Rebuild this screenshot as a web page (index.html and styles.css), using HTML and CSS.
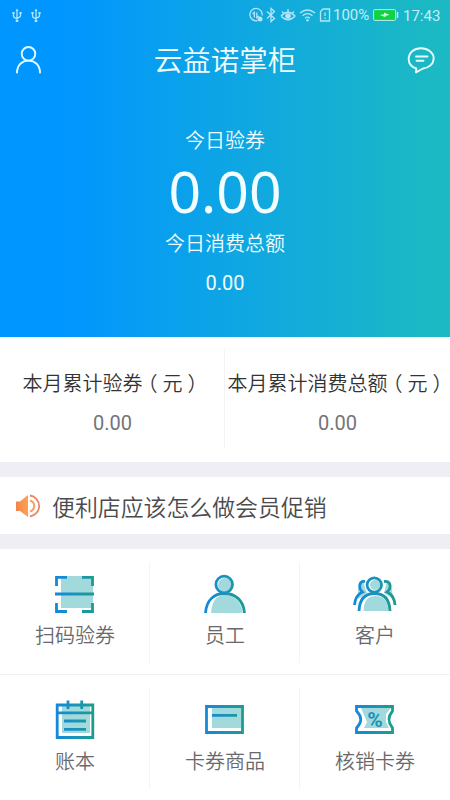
FILE: index.html
```html
<!DOCTYPE html>
<html lang="zh-CN">
<head>
<meta charset="utf-8">
<title>云益诺掌柜</title>
<link rel="stylesheet" href="styles.css">
</head>
<body>
<svg class="defs" width="0" height="0" aria-hidden="true">
  <defs>
    <linearGradient id="brand" gradientUnits="userSpaceOnUse" x1="2" y1="0" x2="42" y2="0">
      <stop offset="0" stop-color="#1389dc"/><stop offset=".5" stop-color="#1a93ba"/><stop offset="1" stop-color="#1d9c8c"/>
    </linearGradient>
    <linearGradient id="horn" gradientUnits="userSpaceOnUse" x1="0" y1="0" x2="24" y2="0">
      <stop offset="0" stop-color="#f2854a"/><stop offset=".45" stop-color="#fba052"/><stop offset="1" stop-color="#e88560"/>
    </linearGradient>
    <symbol id="usb" viewBox="0 0 10 15">
      <path d="M5 2v11M1.500 5v3q0 2 3.500 2.500M8.500 5v2.500q0 2-3.500 2.500"/>
      <path class="solid" d="M3.500 3 5 .5 6.500 3zM.4 4h2.200v2H.4zM7.400 4h2.200v2H7.400zM3.700 12h2.600v2H3.700z"/>
    </symbol>
  </defs>
</svg>
<main class="app">
  <header class="hero">
    <div class="status">
      <div class="status-left">
        <svg class="line" width="10" height="15"><use href="#usb"/></svg>
        <svg class="line" width="10" height="15"><use href="#usb"/></svg>
      </div>
      <div class="status-right">
        <svg class="line" width="16" height="16" viewBox="0 0 16 16"><path d="M9.500 13.600A6.200 6.200 0 1 1 14.200 8.500M6.300 10.500v-5L4.500 7M8.800 5.500v5L10.600 9"/><circle class="solid" cx="12" cy="12" r="2.500"/></svg>
        <svg class="line" width="10" height="16" viewBox="0 0 10 16"><path d="M1 4.500 8.500 11.500 5 14.500v-13L8.500 4.500 1 11.500"/></svg>
        <svg class="line eye" width="16" height="16" viewBox="0 0 16 16"><path d="M1 9q7-7.500 14 0-7 7.500-14 0M2 4.500l1.500 1.500M8 2v2.500M14 4.500 12.500 6"/><circle class="solid" cx="8" cy="9" r="2.800"/></svg>
        <svg class="line wifi" width="17" height="16" viewBox="0 0 17 16"><path d="M1 6q7.500-6 15 0M3.500 8.700q5-4 10 0M6 11.200q2.500-2 5 0"/><circle class="solid" cx="8.500" cy="13.200" r="1.200"/></svg>
        <svg class="line sim" width="12" height="16" viewBox="0 0 12 16"><path d="M4 2h6.500v12h-9V4.500zM6 5.500V9M6 10.500V12"/></svg>
        <span class="percent">100%</span>
        <svg class="battery" width="26" height="12" viewBox="0 0 26 12"><rect x=".6" y=".6" width="22" height="10.800" rx="1" fill="#0fd342" stroke="#b9edf6"/><path d="M24.500 3v6" stroke="#b9edf6" stroke-width="1.500"/><path d="M7 6l4-.8V3.500L16.500 6l-4 .7v1.600z" fill="#d7ffe0"/></svg>
        <span class="time">17:43</span>
      </div>
    </div>
    <nav class="bar">
      <svg class="nav-icon" width="28" height="28" viewBox="0 0 28 28"><circle cx="13.500" cy="7.800" r="6.800"/><path d="M2 26.500C2.200 19 7 14.600 13.500 14.600S24.800 19 25 26.500"/></svg>
      <h1>云益诺掌柜</h1>
      <svg class="nav-icon" width="28" height="28" viewBox="0 0 28 28"><path d="M9.300 22.500C4.500 21 1.700 17.300 1.700 13 1.700 6.700 7 2.200 14 2.200S26.700 6.700 26.700 12.200C26.700 18 21.500 22 16 22.500L9 26.300z"/><path d="M9 10.500h11.500M9.500 14.800h7"/></svg>
    </nav>
    <section class="today">
      <p class="label">今日验券</p>
      <p class="big">0.00</p>
      <p class="label">今日消费总额</p>
      <p class="amount">0.00</p>
    </section>
  </header>
  <section class="month">
    <div class="stat"><p class="stat-name">本月累计验券<span class="paren">（</span>元<span class="paren">）</span></p><p class="stat-value">0.00</p></div>
    <div class="stat"><p class="stat-name">本月累计消费总额<span class="paren">（</span>元<span class="paren">）</span></p><p class="stat-value">0.00</p></div>
  </section>
  <section class="notice">
    <svg width="26" height="26" viewBox="0 0 26 26"><path d="M0 8.500h4L12 2v22L4 18H0z" fill="url(#horn)"/><path d="M14 2.500a10.600 10.600 0 0 1 0 21" fill="none" stroke="#e88a68" stroke-width="1.800"/><path d="M14 7.500a5.700 5.700 0 0 1 0 11" fill="none" stroke="#f6a06b" stroke-width="2"/></svg>
    <span>便利店应该怎么做会员促销</span>
  </section>
  <section class="menu">
    <a class="item"><svg class="icon" viewBox="0 0 44 44"><path class="tint" d="M8 4h32v32H8z"/><path d="M3.500 14V5.400H14M29 5.400h10.500V14M39.500 31v8.500H29M14 39.500H3.500V31M2 22h39"/></svg><span>扫码验券</span></a>
    <a class="item"><svg class="icon" viewBox="0 0 44 44"><path class="tint" d="M8 41C9 28 14 23 22 23s17 6 17.500 18z"/><circle class="tint" cx="22" cy="13" r="7"/><circle cx="21.200" cy="12.500" r="8.300"/><path d="M2.500 41C3.500 28 11 21.500 21.500 21.500S40.500 28 41.500 41"/></svg><span>员工</span></a>
    <a class="item"><svg class="icon" viewBox="0 0 44 44"><path class="tint" d="M10.500 39C11 28 15 24 22.500 24S35 28 35.500 39zM5 17l5-8 4 12-9 6zM39 17l-5-8-3 12 9 6z"/><circle class="back" cx="21.300" cy="13" r="7.200"/><circle class="tint" cx="22" cy="13" r="5"/><circle cx="21.300" cy="13" r="7.200"/><path d="M6 39C6.500 27 12 21.500 21.500 21.500S36.500 27 37 39M12 9.500C6 8.500 5 16 9.500 20 5 22 2 27 1.500 33M31 9.500C38 8.500 39 16 34 20c5 2 7.500 7 8 13"/></svg><span>客户</span></a>
    <a class="item"><svg class="icon" viewBox="0 0 44 44"><path class="tint" d="M9 7h28v28H9z"/><path d="M4.200 7h35.600v32.500H4.200zM4.200 14.800h35.600M15 2.500V11M28.700 2.500V11M11 23h22M11 31.300h22"/></svg><span>账本</span></a>
    <a class="item"><svg class="icon" viewBox="0 0 44 44"><path class="tint" d="M9 10h29v20H9z"/><path d="M3.500 8.500h36v26h-36zM9 17.300h25"/></svg><span>卡券商品</span></a>
    <a class="item"><svg class="icon" viewBox="0 0 44 44"><path class="tint" d="M8 10h30l-5 6v8l3 6H11l3-6z"/><path d="M3.500 8.500h36V13q-7 8.500 0 17v4.500h-36V30q8.500-8.500 0-17z"/><text class="pct" x="22" y="29" text-anchor="middle">%</text></svg><span>核销卡券</span></a>
  </section>
</main>
</body>
</html>
```

FILE: styles.css
```css
* { box-sizing: border-box; }
body { margin: 0; font-family: Roboto, "Noto Sans CJK SC DemiLight", "Noto Sans CJK SC Light", "Noto Sans CJK SC", sans-serif; background: #efeef4; }
p, h1 { margin: 0; font-weight: 400; }
.defs { position: absolute; }
.app { width: 450px; height: 800px; overflow: hidden; display: flex; flex-direction: column; }
.hero { height: 337px; flex: none; color: #f2fdff; background: linear-gradient(90deg, #0096ff 14%, #0ea5e5 50%, #1bb9c3 96%); }
.status { height: 30px; padding: 0 10px 0 12px; display: flex; justify-content: space-between; align-items: center; color: #c2edfa; }
.status-left, .status-right { display: flex; align-items: center; }
.status-left { gap: 9px; }
.line { fill: none; stroke: #b4e6f8; stroke-width: 1.300; }
.solid { fill: #b4e6f8; stroke: none; }
.eye { margin-left: 4px; }
.wifi { margin-left: 3px; }
.sim { margin-left: 3px; }
.status-right > .line:first-child { margin-right: 2px; }
.percent { font-size: 15px; margin-left: 2px; width: 38px; }
.battery { margin-left: 2px; }
.time { font-size: 15px; line-height: 20px; margin: 2px 0 0 4px; width: 37px; }
.bar { height: 60px; padding: 0 15px; display: flex; align-items: center; justify-content: space-between; }
.nav-icon { fill: none; stroke: #e6fbff; stroke-width: 1.900; stroke-linecap: round; stroke-linejoin: round; }
h1 { font-size: 28.500px; line-height: 40px; padding-top: 4px; }
.today { text-align: center; padding-top: 36px; }
.label { font-size: 20px; line-height: 30px; }
.big { font-family: "Noto Sans", sans-serif; font-size: 57px; line-height: 71px; height: 73px; }
.amount { font-size: 20px; line-height: 30px; margin-top: 9px; }
.month { height: 125px; flex: none; background: #fff; display: flex; }
.stat { width: 50%; text-align: center; padding-top: 32px; white-space: nowrap; }
.stat:first-child { background: linear-gradient(#f3f3f5, #f3f3f5) 100% 12px / 1px 100px no-repeat; }
.stat-name { font-size: 20px; line-height: 30px; color: #333; }
.paren { display: inline-block; width: 20px; padding: 0 5px; font-feature-settings: "halt"; }
.stat-value { font-size: 20px; line-height: 30px; color: #747478; margin-top: 9px; }
.notice { height: 57px; flex: none; margin: 15px 0; padding-left: 16px; background: #fff; display: flex; align-items: center; gap: 10px; font-size: 22.900px; color: #4b4b4d; }
.menu { flex: 1; background: #fff; display: grid; grid-template-columns: repeat(3, 1fr); grid-template-rows: 126px 125px; }
.item { display: flex; flex-direction: column; align-items: center; padding-top: 23px; font-size: 20px; line-height: 30px; color: #69696b; background: linear-gradient(#f4f4f6, #f4f4f6) 100% 13px / 1px 101px no-repeat; }
.item:nth-child(3n) { background: none; }
.item:nth-child(-n+3) { border-bottom: 1px solid #f1f1f3; }
.icon { width: 44px; height: 44px; margin-bottom: 5px; fill: none; stroke: url(#brand); stroke-width: 2.800; }
.tint { fill: #a2d9dc; stroke: none; }
.back { fill: #fff; stroke: #fff; stroke-width: 5; }
.pct { font: 700 21px Roboto, sans-serif; fill: url(#brand); stroke: none; }
```
